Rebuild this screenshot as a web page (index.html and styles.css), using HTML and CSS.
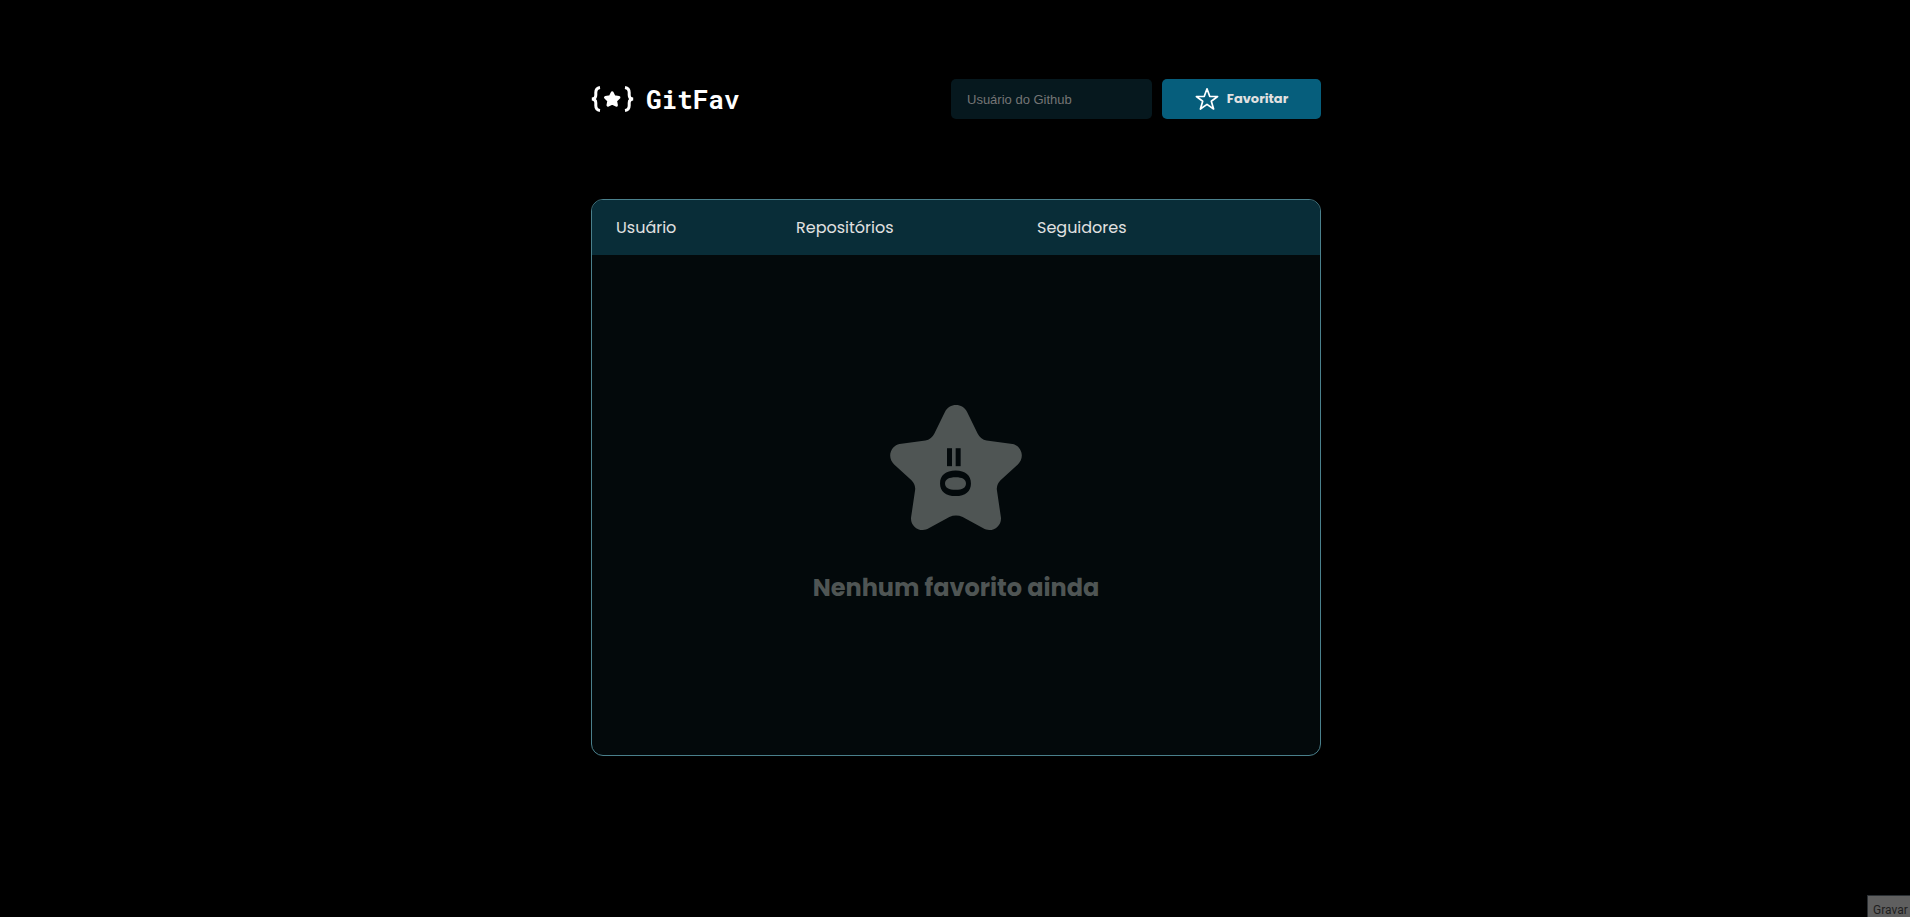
FILE: index.html
```html
<!DOCTYPE html>
<html lang="pt-BR">
<head>
<meta charset="utf-8">
<meta name="viewport" content="width=device-width, initial-scale=1">
<title>GitFav</title>
<link rel="stylesheet" href="styles.css">
</head>
<body>
<div class="app">
  <header class="header">
    <h1 class="logo">
      <svg class="logo-icon" viewBox="0 0 43 26" aria-hidden="true">
        <g fill="none" stroke="currentColor" stroke-width="3">
          <path d="M9 1.5C5.5 2 4.8 4 4.8 6.5V9C4.8 11.5 3.8 13 .8 13C3.8 13 4.8 14.5 4.8 17V19.5C4.8 22 5.5 24 9 24.5"/>
          <path d="M34 1.5C37.5 2 38.2 4 38.2 6.5V9C38.2 11.5 39.2 13 42.2 13C39.2 13 38.2 14.5 38.2 17V19.5C38.2 22 37.5 24 34 24.5"/>
        </g>
        <path fill="currentColor" stroke="currentColor" stroke-width="3" stroke-linejoin="round" d="M21.2 6.8L23.2 10.8L27.9 11.5L24.6 14.7L25.4 19.2L21.2 17.1L17 19.2L17.8 14.7L14.5 11.5L19.2 10.8Z"/>
      </svg>
      <span>GitFav</span>
    </h1>
    <form class="search">
      <input class="search-input" type="text" aria-label="Usuário do Github" placeholder="Usuário do Github">
      <button class="search-button" type="button">
        <svg class="button-icon" viewBox="0 0 24 24" aria-hidden="true">
          <path fill="none" stroke="currentColor" stroke-width="1.7" stroke-linejoin="round" d="M12 1.8L14.7 9.3L22.6 9.5L16.3 14.3L18.6 22L12 17.4L5.4 22L7.7 14.3L1.4 9.5L9.3 9.3Z"/>
        </svg>
        Favoritar
      </button>
    </form>
  </header>
  <main class="panel">
    <table class="favorites">
      <thead>
        <tr>
          <th class="col-user">Usuário</th>
          <th class="col-repos">Repositórios</th>
          <th class="col-followers">Seguidores</th>
        </tr>
      </thead>
      <tbody>
        <tr>
          <td colspan="3">
            <div class="empty">
              <svg class="empty-star" viewBox="60 44 396 376" aria-hidden="true">
                <path fill="currentColor" d="M258 44C272 44 285 52 291 64L323 130Q332 148 350 151L428 161C442 163 456 178 456 196C456 207 451 216 444 223L392 270Q379 283 381 300L393 381C396 402 379 420 358 420C352 420 345 418 340 415L278 381Q258 372 238 381L176 415C171 418 164 420 158 420C137 420 120 402 123 381L135 300Q137 283 124 270L72 223C65 216 60 207 60 196C60 178 74 163 88 161L166 151Q184 148 193 130L225 64C231 52 244 44 258 44Z"/>
                <g class="empty-face">
                  <rect x="231" y="174" width="15" height="54"/>
                  <rect x="257" y="174" width="15" height="54"/>
                  <path fill-rule="evenodd" d="M257 241C286 241 303 256 303 280C303 304 286 318 257 318C227 318 210 304 210 280C210 256 227 241 257 241ZM257 261C237 261 225 267 225 280C225 293 237 299 257 299C277 299 288 293 288 280C288 267 277 261 257 261Z"/>
                </g>
              </svg>
              <p class="empty-text">Nenhum favorito ainda</p>
            </div>
          </td>
        </tr>
      </tbody>
    </table>
  </main>
</div>
<div class="tooltip">Gravar</div>
</body>
</html>
```
FILE: styles.css
```css
* {
  box-sizing: border-box;
  margin: 0;
  padding: 0;
}

body {
  min-height: 100vh;
  padding-left: 2px;
  background: #000;
  color: #e1e1e1;
  font: 16px/24px Poppins, Inter, sans-serif;
}

.app {
  max-width: 730px;
  margin: 0 auto;
  padding-top: 79px;
}

.header {
  display: flex;
  align-items: center;
  justify-content: space-between;
  margin-bottom: 80px;
}

.logo {
  display: flex;
  align-items: center;
  gap: 12px;
  color: #fff;
  font: 700 26px/40px "Roboto Mono", "DejaVu Sans Mono", monospace;
}

.logo-icon {
  width: 43px;
  height: 26px;
}

.search {
  display: flex;
  gap: 10px;
}

.search-input {
  width: 201px;
  height: 40px;
  padding: 0 16px;
  border: 0;
  border-radius: 5px;
  background: #06181e;
  color: #e1e1e1;
  font: 13px "Liberation Sans", Arial, sans-serif;
}

.search-input::placeholder {
  color: #757575;
}

.search-button {
  display: flex;
  align-items: center;
  justify-content: center;
  gap: 8px;
  width: 159px;
  height: 40px;
  border: 0;
  border-radius: 5px;
  background: #065e7c;
  color: #e1e1e1;
  font: bold 13px Poppins, Inter, sans-serif;
}

.button-icon {
  width: 24px;
  height: 24px;
  color: #fff;
}

.panel {
  overflow: hidden;
  border: 1px solid #4a808c;
  border-radius: 12px;
  background: #03090b;
}

.favorites {
  width: 100%;
  border-collapse: collapse;
  table-layout: fixed;
}

.favorites th {
  height: 55px;
  padding: 0 24px;
  background: #092d38;
  font-weight: 400;
  text-align: left;
}

.col-user {
  width: 180px;
}

.col-repos {
  width: 241px;
}

.empty {
  display: flex;
  flex-direction: column;
  align-items: center;
  justify-content: center;
  gap: 40px;
  height: 500px;
  color: #4f5554;
}

.empty-star {
  width: 132px;
  height: 125px;
}

.empty-face {
  fill: #03090b;
}

.empty-text {
  font-size: 24px;
  font-weight: 700;
  line-height: 36px;
}

.tooltip {
  position: fixed;
  right: 0;
  bottom: 0;
  width: 43px;
  height: 22px;
  padding: 5px 0 0 5px;
  border: 1px solid #2a2f33;
  border-width: 1px 0 0 1px;
  background: #5f5f5f;
  color: #1e1e1e;
  font: 12px/18px Roboto, sans-serif;
}
```
